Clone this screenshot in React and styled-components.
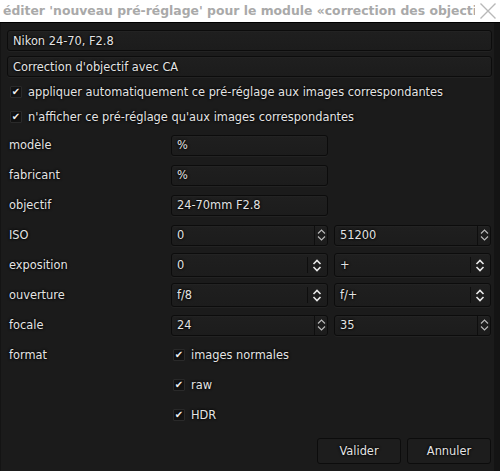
import React from "react";
import styled, { createGlobalStyle } from "styled-components";

const Global = createGlobalStyle`
  html, body { margin: 0; padding: 0; background: #111; }
  body { font-family: "DejaVu Sans", sans-serif; font-size: 11.4px; color: #dcdcdc; }
  * { box-sizing: border-box; }
`;

const Window = styled.div`
  width: 500px;
  height: 471px;
  display: flex;
  flex-direction: column;
  background: #141414;
  overflow: hidden;
`;

const TitleBar = styled.div`
  height: 23px;
  flex: none;
  background: #ffffff;
  border-bottom: 1px solid #000;
  display: grid;
  grid-template-columns: minmax(0, 1fr) 20px;
  align-items: center;
  padding-left: 3px;
  padding-right: 2px;
  column-gap: 3px;
`;

const TitleText = styled.div`
  min-width: 0;
  font-family: "DejaVu Sans", sans-serif;
  font-weight: bold;
  font-size: 12.4px;
  color: #a9a9a9;
  white-space: nowrap;
  overflow: hidden;
  padding-bottom: 1px;
`;

const CloseBox = styled.span`
  width: 20px;
  height: 20px;
  display: flex;
  align-items: center;
  justify-content: center;
`;

const Body = styled.div`
  flex: 1;
  margin: 0 6px 0 1px;
  background: #1b1b1b;
  padding: 7px 2px 7px 6px;
  display: flex;
  flex-direction: column;
`;

const Entry = styled.div`
  height: ${(p) => p.$h || 21}px;
  background: linear-gradient(#1f1f1f, #1c1c1c);
  border: 1px solid #0c0c0c;
  border-radius: 3px;
  box-shadow: inset 0 1px 0 rgba(255,255,255,0.02), 0 1px 0 rgba(255,255,255,0.03);
  display: flex;
  align-items: center;
  padding-left: 5px;
  color: #e4e4e4;
  text-shadow: 0 0 3px #000, 0 0 2px #000;
  white-space: nowrap;
  overflow: hidden;
  margin-bottom: ${(p) => p.$mb || 0}px;
`;

const EntryText = styled.span`
  flex: 1;
`;

const CheckRow = styled.label`
  display: flex;
  align-items: center;
  gap: 6px;
  height: 25px;
  padding-left: ${(p) => p.$pl || 3}px;
  text-shadow: 0 0 3px #000, 0 0 2px #000;
  color: #e4e4e4;
  white-space: nowrap;
`;

const Box = styled.span`
  width: 12px;
  height: 12px;
  background: #141414;
  border: 1px solid #2a2a2a;
  border-radius: 1px;
  display: flex;
  align-items: center;
  justify-content: center;
  flex: none;
  font-size: 10px;
  line-height: 1;
  color: #f0f0f0;
`;

const Grid = styled.div`
  margin-top: 1px;
  display: grid;
  grid-template-columns: 158px 157px 157px;
  column-gap: 6px;
  grid-auto-rows: 30px;
  align-items: center;
`;

const Label = styled.div`
  padding-left: 2px;
  color: #e4e4e4;
  text-shadow: 0 0 3px #000, 0 0 2px #000;
  grid-column: 1;
`;

const Cell = styled.div`
  grid-column: ${(p) => p.$col} / span 1;
`;

const Spin = styled.div`
  width: 13px;
  align-self: stretch;
  border-left: 1px solid #0e0e0e;
  display: flex;
  flex-direction: column;
  align-items: center;
  justify-content: space-around;
  padding: 2px 0;
`;

const Combo = styled.div`
  width: 18px;
  height: 16px;
  border-left: 1px solid #0e0e0e;
  display: flex;
  align-items: center;
  justify-content: center;
  margin-right: 2px;
`;

const FormatCol = styled.div`
  grid-column: 2 / span 2;
  display: flex;
  align-items: center;
`;

const Buttons = styled.div`
  margin-top: auto;
  display: flex;
  justify-content: flex-end;
  gap: 6px;
  padding-right: 1px;
`;

const Button = styled.button`
  width: 84px;
  height: 26px;
  background: #1d1d1d;
  border: 1px solid #0c0c0c;
  border-radius: 3px;
  color: #e4e4e4;
  font-family: "DejaVu Sans", sans-serif;
  font-size: 11.4px;
  text-shadow: 0 0 3px #000, 0 0 2px #000;
`;

const Up = () => (
  <svg width="9" height="5" viewBox="0 0 9 5">
    <path d="M1 4.5 L4.5 1 L8 4.5" fill="none" stroke="#bbb" strokeWidth="1.1" />
  </svg>
);
const Down = () => (
  <svg width="9" height="5" viewBox="0 0 9 5">
    <path d="M1 0.5 L4.5 4 L8 0.5" fill="none" stroke="#bbb" strokeWidth="1.1" />
  </svg>
);
const UpDown = () => (
  <svg width="10" height="13" viewBox="0 0 10 13">
    <path d="M1.5 5 L5 1.5 L8.5 5 M1.5 8 L5 11.5 L8.5 8" fill="none" stroke="#e8e8e8" strokeWidth="1.6" />
  </svg>
);

const Check = ({ children, pl }) => (
  <CheckRow $pl={pl}>
    <Box>✔</Box>
    <span>{children}</span>
  </CheckRow>
);

const SpinEntry = ({ value }) => (
  <Entry>
    <EntryText>{value}</EntryText>
    <Spin>
      <Up />
      <Down />
    </Spin>
  </Entry>
);

const ComboEntry = ({ value }) => (
  <Entry $h={24}>
    <EntryText>{value}</EntryText>
    <Combo>
      <UpDown />
    </Combo>
  </Entry>
);

export default function App() {
  return (
    <>
      <Global />
      <Window>
        <TitleBar>
          <TitleText>éditer 'nouveau pré-réglage' pour le module «correction des objectifs»</TitleText>
          <CloseBox>
            <svg width="18" height="18" viewBox="0 0 18 18">
              <path d="M1.5 1.5 L16.5 16.5 M16.5 1.5 L1.5 16.5" stroke="#b8b8b8" strokeWidth="1.4" fill="none" />
            </svg>
          </CloseBox>
        </TitleBar>
        <Body>
          <Entry $mb={5}>Nikon 24-70, F2.8</Entry>
          <Entry $mb={2}>Correction d'objectif avec CA</Entry>
          <Check>appliquer automatiquement ce pré-réglage aux images correspondantes</Check>
          <Check>n'afficher ce pré-réglage qu'aux images correspondantes</Check>
          <Grid>
            <Label>modèle</Label>
            <Cell $col={2}><Entry>%</Entry></Cell>
            <Label>fabricant</Label>
            <Cell $col={2}><Entry>%</Entry></Cell>
            <Label>objectif</Label>
            <Cell $col={2}><Entry>24-70mm F2.8</Entry></Cell>
            <Label>ISO</Label>
            <Cell $col={2}><SpinEntry value="0" /></Cell>
            <Cell $col={3}><SpinEntry value="51200" /></Cell>
            <Label>exposition</Label>
            <Cell $col={2}><ComboEntry value="0" /></Cell>
            <Cell $col={3}><ComboEntry value="+" /></Cell>
            <Label>ouverture</Label>
            <Cell $col={2}><ComboEntry value="f/8" /></Cell>
            <Cell $col={3}><ComboEntry value="f/+" /></Cell>
            <Label>focale</Label>
            <Cell $col={2}><SpinEntry value="24" /></Cell>
            <Cell $col={3}><SpinEntry value="35" /></Cell>
            <Label>format</Label>
            <FormatCol><Check pl={2}>images normales</Check></FormatCol>
            <FormatCol><Check pl={2}>raw</Check></FormatCol>
            <FormatCol><Check pl={2}>HDR</Check></FormatCol>
          </Grid>
          <Buttons>
            <Button>Valider</Button>
            <Button>Annuler</Button>
          </Buttons>
        </Body>
      </Window>
    </>
  );
}
